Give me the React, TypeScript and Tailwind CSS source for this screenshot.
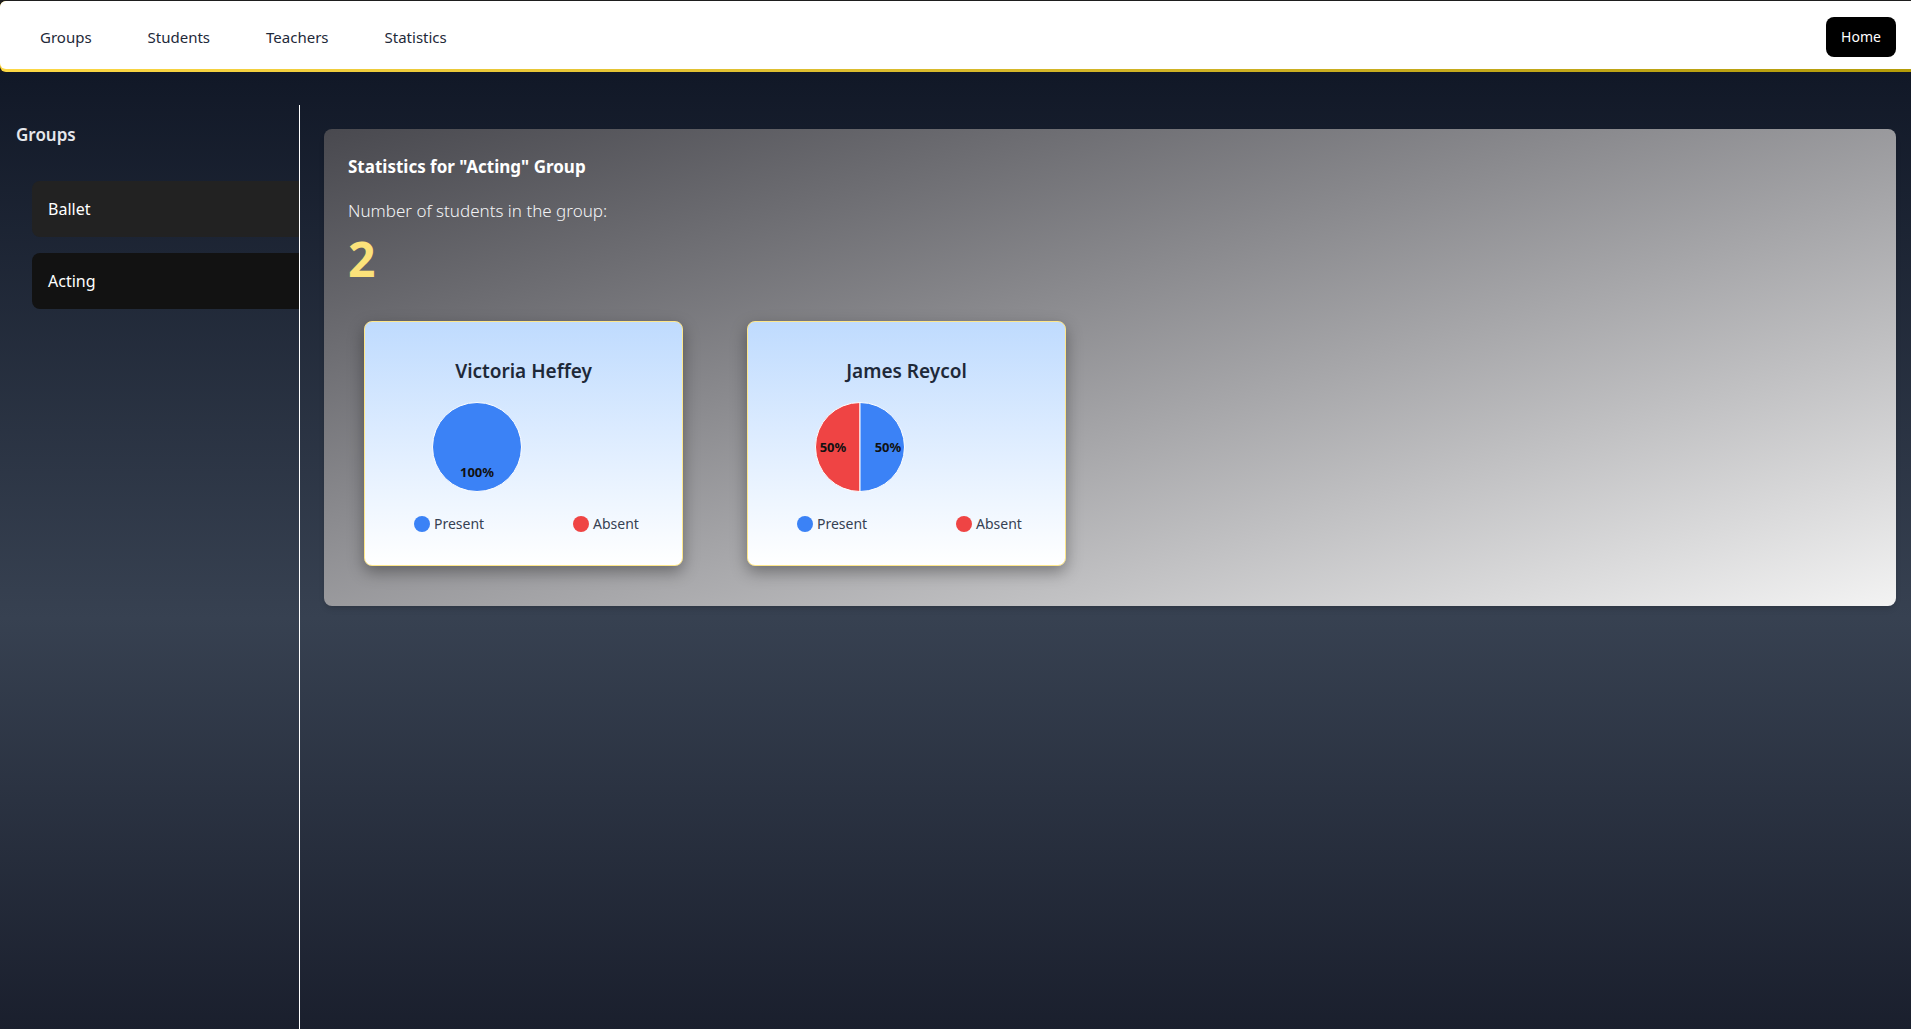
const navLinks = ["Groups", "Students", "Teachers", "Statistics"];
const groups = ["Ballet", "Acting"];

const students = [
  { name: "Victoria Heffey", present: 100, absent: 0 },
  { name: "James Reycol", present: 50, absent: 50 },
];

const PieChart = ({ present, absent }: { present: number; absent: number }) => {
  const r = 44.5;
  return (
    <svg width="100" height="100" viewBox="0 0 100 100">
      {absent === 0 ? (
        <>
          <circle cx="50" cy="50" r={r} fill="#3b82f6" stroke="#fff" strokeWidth="1" />
          <text x="50" y="80" textAnchor="middle" fontSize="13" fontWeight="700" fill="#111">
            {present}%
          </text>
        </>
      ) : (
        <>
          <path d={`M50 50 L50 ${50 - r} A${r} ${r} 0 0 0 50 ${50 + r} Z`} fill="#ef4444" stroke="#fff" strokeWidth="1" />
          <path d={`M50 50 L50 ${50 - r} A${r} ${r} 0 0 1 50 ${50 + r} Z`} fill="#3b82f6" stroke="#fff" strokeWidth="1" />
          <text x="23" y="54.5" textAnchor="middle" fontSize="13" fontWeight="700" fill="#111">
            {absent}%
          </text>
          <text x="78" y="54.5" textAnchor="middle" fontSize="13" fontWeight="700" fill="#111">
            {present}%
          </text>
        </>
      )}
    </svg>
  );
};

const StudentCard = ({ name, present, absent }: { name: string; present: number; absent: number }) => {
  return (
    <div className="m-4 w-[319px] h-[245px] rounded-lg border border-[#fde68a] bg-gradient-to-b from-[#bfdbfe] to-white shadow-[0_6px_16px_rgba(0,0,0,0.35)] pt-[35px]">
      <h3 className="text-center text-[19px] font-semibold leading-7 text-gray-800">{name}</h3>

      <div className="mt-3 ml-[62px]">
        <PieChart present={present} absent={absent} />
      </div>

      {/* legend */}
      <div className="mt-[17px] flex pl-[49px] text-sm leading-5 text-gray-700">
        <div className="w-[159px] flex items-center gap-1">
          <span className="w-4 h-4 rounded-full bg-[#3b82f6]" />
          Present
        </div>
        <div className="flex items-center gap-1">
          <span className="w-4 h-4 rounded-full bg-[#ef4444]" />
          Absent
        </div>
      </div>
    </div>
  );
};

export default function App() {
  return (
    <div className="min-h-screen flex flex-col bg-[#1e1e1e] pt-px font-['Noto_Sans',sans-serif]">
      {/* nav */}
      <div className="rounded-l-md bg-gradient-to-r from-[#fdd845] to-[#b49c08] pb-[3px]">
        <nav className="h-[68px] pt-1 rounded-l-md bg-white flex items-center justify-between pl-3 pr-[15px]">
          <div className="flex items-center">
            {navLinks.map((link) => (
              <a key={link} className="px-7 text-[15px] text-gray-800 cursor-pointer">
                {link}
              </a>
            ))}
          </div>
          <button className="w-[70px] h-10 rounded-lg bg-black text-white text-sm">Home</button>
        </nav>
      </div>

      <div className="flex flex-1 pt-[33px] bg-[linear-gradient(to_bottom,#111827_0%,#374151_57%,#1a1f2d_100%)]">
        {/* sidebar */}
        <aside className="w-[300px] shrink-0 border-r border-white pt-4">
          <h2 className="px-4 text-[17px] font-semibold leading-7 text-gray-200">Groups</h2>
          <div className="mt-8 ml-8 flex flex-col gap-4">
            {groups.map((g) => (
              <div
                key={g}
                className={`h-14 flex items-center pl-4 rounded-l-lg text-base text-white ${
                  g === "Acting" ? "bg-[#121212]" : "bg-[#222222]"
                }`}
              >
                {g}
              </div>
            ))}
          </div>
        </aside>

        {/* main */}
        <main className="flex-1 pt-6 pl-6 pr-[15px]">
          <div className="rounded-lg bg-gradient-to-br from-[#49494f] to-[#f3f3f3] p-6 shadow-md">
            <h1 className="text-[17px] font-bold leading-7 text-white">Statistics for "Acting" Group</h1>
            <p className="mt-4 text-[17px] font-light leading-7 text-gray-100">Number of students in the group:</p>
            <div className="mt-2.5 text-5xl font-bold leading-none text-[#fbe27a]">2</div>

            <div className="mt-[22px] flex gap-8">
              {students.map((s) => (
                <StudentCard key={s.name} {...s} />
              ))}
            </div>
          </div>
        </main>
      </div>
    </div>
  );
}
